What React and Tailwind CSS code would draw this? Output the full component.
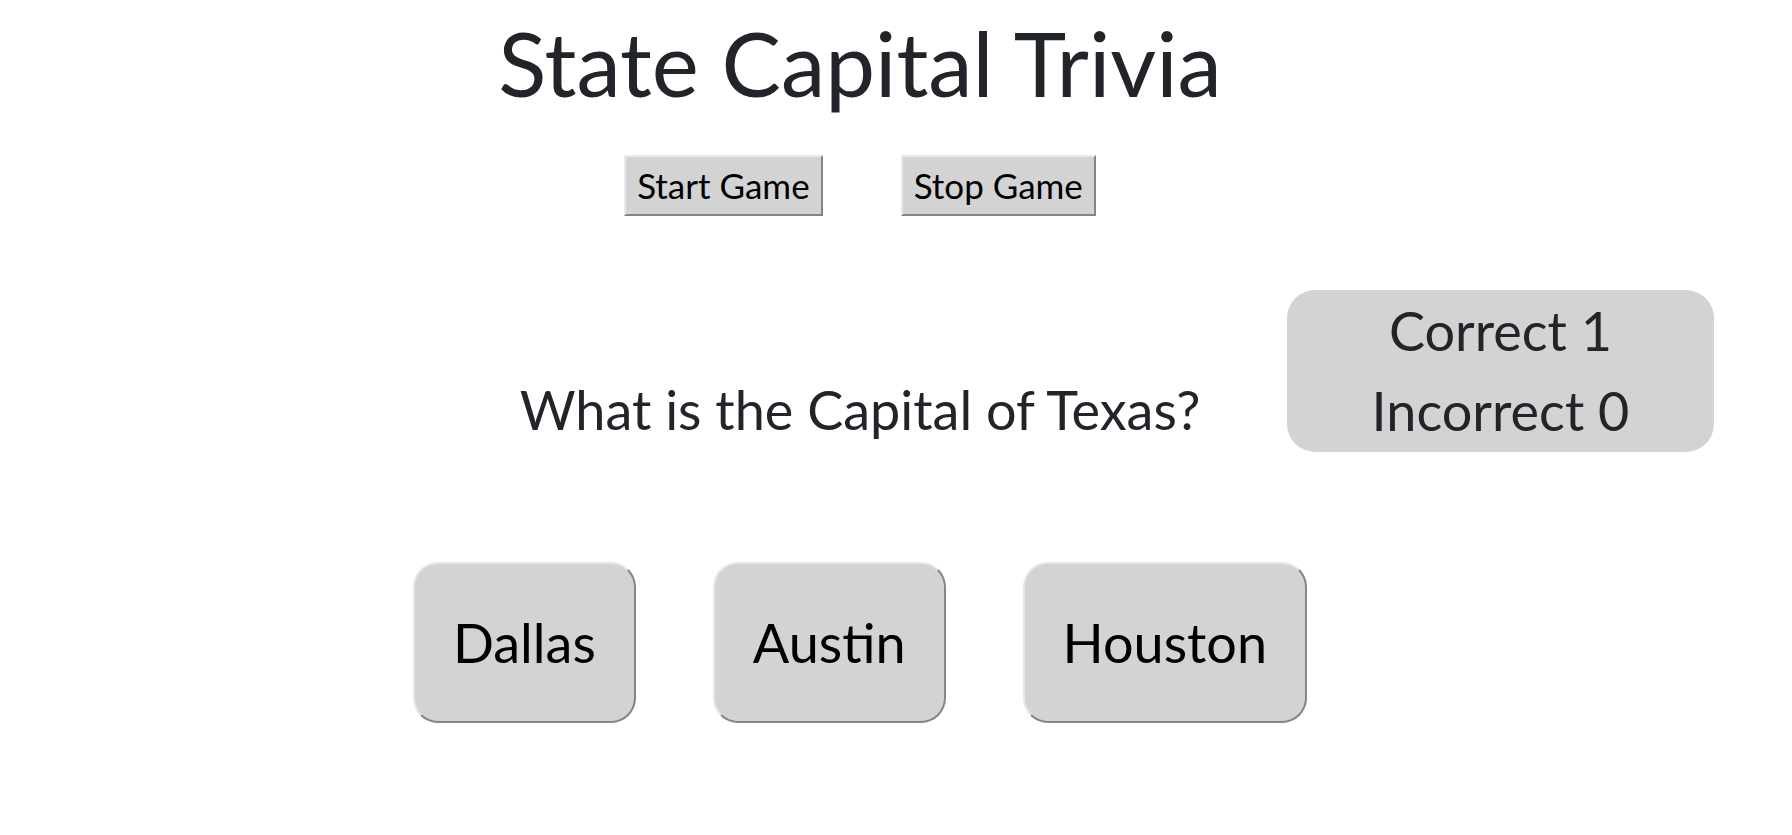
import React from 'react'

export default function App() {
    const answers = ['Dallas', 'Austin', 'Houston']

    return (
        <div className="w-[1720px] text-center text-[#212529] bg-white min-h-[835px] font-['Lato','Noto_Sans',sans-serif]">
            <h1 className="text-[89px] leading-[1.2] pt-[10px] font-normal">State Capital Trivia</h1>

            <div className="flex justify-center gap-[78px] mt-[38px]">
                <button className="h-[61px] px-[11px] bg-[#d3d3d3] text-black text-[35px] border-2 border-t-[#e9e9e9] border-l-[#e9e9e9] border-b-[#858585] border-r-[#858585]">
                    Start Game
                </button>
                <button className="h-[61px] px-[11px] bg-[#d3d3d3] text-black text-[35px] border-2 border-t-[#e9e9e9] border-l-[#e9e9e9] border-b-[#858585] border-r-[#858585]">
                    Stop Game
                </button>
            </div>

            <div className="grid grid-cols-[1fr_auto_1fr] items-end mt-[74px]">
                <div />
                <p className="text-[54px] leading-[1.5] mb-[2px]">What is the Capital of Texas?</p>
                <div className="flex justify-end pr-[6px]">
                    <div className="w-[427px] h-[162px] rounded-[28px] bg-[#d3d3d3] flex flex-col items-center justify-center text-[54px] leading-[80px]">
                        <span>Correct 1</span>
                        <span>Incorrect 0</span>
                    </div>
                </div>
            </div>

            <div className="flex justify-center gap-[77px] mt-[110px]">
                {answers.map(a => (
                    <button
                        key={a}
                        className="h-[161px] px-[38px] bg-[#d3d3d3] text-black text-[54px] rounded-[25px] border-2 border-t-[#e6e6e6] border-l-[#e6e6e6] border-b-[#858585] border-r-[#858585]"
                    >
                        {a}
                    </button>
                ))}
            </div>
        </div>
    )
}
